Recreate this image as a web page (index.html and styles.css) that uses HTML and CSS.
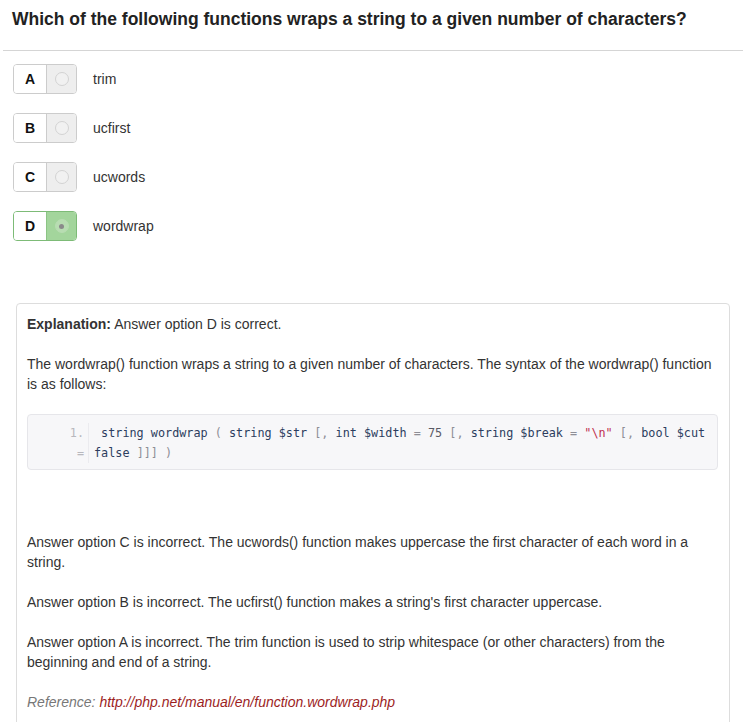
FILE: index.html
```html
<!DOCTYPE html>
<html>
<head>
<meta charset="utf-8">
<link rel="stylesheet" href="styles.css">
</head>
<body>
<div class="header">
  <h1 class="title">Which of the following functions wraps a string to a given number of characters?</h1>
</div>
<div class="options">
  <div class="option">
    <div class="choice"><span class="letter">A</span><span class="radio-cell"><span class="radio"></span></span></div>
    <span class="label">trim</span>
  </div>
  <div class="option">
    <div class="choice"><span class="letter">B</span><span class="radio-cell"><span class="radio"></span></span></div>
    <span class="label">ucfirst</span>
  </div>
  <div class="option">
    <div class="choice"><span class="letter">C</span><span class="radio-cell"><span class="radio"></span></span></div>
    <span class="label">ucwords</span>
  </div>
  <div class="option">
    <div class="choice selected"><span class="letter">D</span><span class="radio-cell"><span class="radio"><span class="dot"></span></span></span></div>
    <span class="label">wordwrap</span>
  </div>
</div>
<div class="panel">
  <p><b>Explanation:</b> Answer option D is correct.</p>
  <p>The wordwrap() function wraps a string to a given number of characters. The syntax of the wordwrap() function is as follows:</p>
  <div class="code">
    <div class="gutter"><div>1.</div><div>=</div></div>
    <div class="src"><div>&nbsp;<span class="k">string</span> <span class="k">wordwrap</span> <span class="p">(</span> <span class="k">string</span> <span class="k">$str</span> <span class="p">[,</span> <span class="k">int</span> <span class="k">$width</span> <span class="p">=</span> <span class="n">75</span> <span class="p">[,</span> <span class="k">string</span> <span class="k">$break</span> <span class="p">=</span> <span class="s">"\n"</span> <span class="p">[,</span> <span class="k">bool</span> <span class="k">$cut</span></div><div><span class="k">false</span> <span class="p">]]]</span> <span class="p">)</span></div></div>
  </div>
  <p class="empty">&nbsp;</p>
  <p>Answer option C is incorrect. The ucwords() function makes uppercase the first character of each word in a string.</p>
  <p>Answer option B is incorrect. The ucfirst() function makes a string's first character uppercase.</p>
  <p>Answer option A is incorrect. The trim function is used to strip whitespace (or other characters) from the beginning and end of a string.</p>
  <p class="ref">Reference: <a href="#">http://php.net/manual/en/function.wordwrap.php</a></p>
</div>
</body>
</html>
```

FILE: styles.css
```css
html, body {
  margin: 0;
  padding: 0;
  background: #fff;
}
body {
  font-family: "Liberation Sans", Arial, sans-serif;
  font-size: 14px;
  line-height: 20px;
  color: #333;
}
.header {
  margin-left: 3px;
  border-bottom: 1px solid #d5d5d5;
  padding: 8px 0 20px 9px;
}
.title {
  margin: 0;
  font-size: 17.5px;
  line-height: 22px;
  font-weight: bold;
  color: #222;
}
.options {
  padding: 13px 0 0 13px;
  display: flex;
  flex-direction: column;
  gap: 19px;
}
.option {
  display: flex;
  align-items: center;
  gap: 16px;
}
.choice {
  display: flex;
  height: 28px;
  border: 1px solid #ccc;
  border-radius: 4px;
  overflow: hidden;
}
.letter {
  width: 32px;
  display: flex;
  align-items: center;
  justify-content: center;
  font-weight: bold;
  font-size: 14px;
  color: #111;
  background: #fff;
}
.radio-cell {
  width: 29px;
  display: flex;
  align-items: center;
  justify-content: center;
  background: #eee;
  border-left: 1px solid #ccc;
}
.radio {
  width: 12px;
  height: 12px;
  border: 1px solid #d3d3d3;
  border-radius: 50%;
  background: #f1f1f1;
  display: flex;
  align-items: center;
  justify-content: center;
}
.choice.selected {
  border-color: #7dbb77;
}
.choice.selected .radio-cell {
  background: #a3d59c;
  border-left-color: #8cc485;
}
.choice.selected .radio {
  background: #b8ddb2;
  border-color: #b8ddb2;
}
.dot {
  width: 5px;
  height: 5px;
  border-radius: 50%;
  background: #8a8a8a;
}
.label {
  font-size: 14px;
}
.panel {
  margin: 62px 13px 0 16px;
  border: 1px solid #ddd;
  border-radius: 4px;
  padding: 10px 11px 10px 10px;
}
.panel p {
  margin: 0 0 20px;
}
.code {
  display: flex;
  background: #f7f7f9;
  border: 1px solid #e6e6ea;
  border-radius: 4px;
  padding: 8px 0 6px;
  margin-bottom: 22px;
  font-family: "DejaVu Sans Mono", "Liberation Mono", monospace;
  font-size: 11.8px;
  line-height: 20px;
}
.gutter {
  width: 56px;
  padding-right: 4px;
  text-align: right;
  color: #b8b8be;
  border-right: 1px solid #ebebef;
}
.src {
  padding-left: 5px;
  color: #2c3d5e;
  white-space: pre;
}
.k { color: #2c3d5e; }
.p { color: #8e8e96; }
.n { color: #5a5a66; }
.s { color: #c0304f; }
.ref {
  font-style: italic;
  color: #777;
}
.ref a {
  color: #9c1e1e;
  text-decoration: none;
}
```
